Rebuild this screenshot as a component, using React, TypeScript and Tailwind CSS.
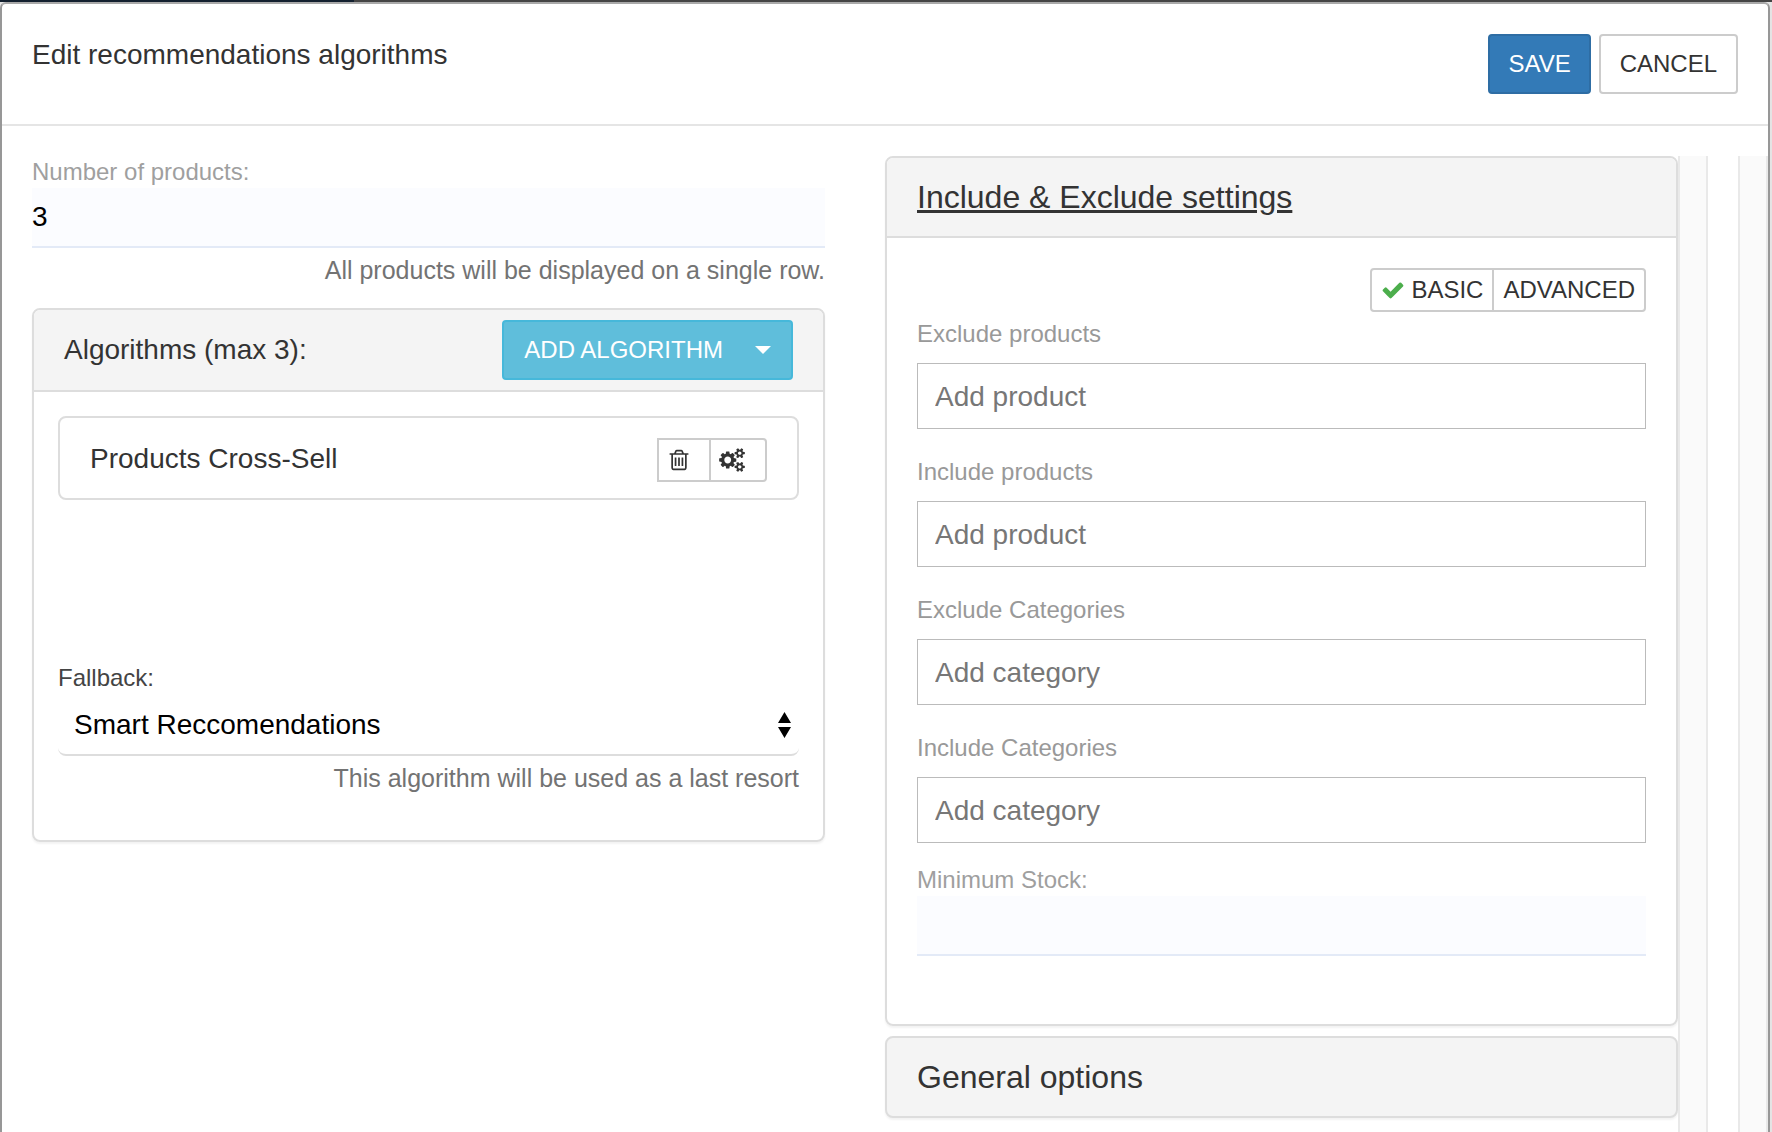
import { useState } from "react";

const TRASH =
  "M704 736v576q0 14-9 23t-23 9h-64q-14 0-23-9t-9-23v-576q0-14 9-23t23-9h64q14 0 23 9t9 23zm256 0v576q0 14-9 23t-23 9h-64q-14 0-23-9t-9-23v-576q0-14 9-23t23-9h64q14 0 23 9t9 23zm256 0v576q0 14-9 23t-23 9h-64q-14 0-23-9t-9-23v-576q0-14 9-23t23-9h64q14 0 23 9t9 23zm128 724v-948h-896v948q0 22 7 40.5t14.5 27 10.5 8.5h832q3 0 10.5-8.5t14.5-27 7-40.5zm-672-1076h448l-48-117q-7-9-17-11h-317q-10 2-17 11zm928 32v64q0 14-9 23t-23 9h-96v948q0 83-47 143.5t-113 60.5h-832q-66 0-113-58.5t-47-141.5v-952h-96q-14 0-23-9t-9-23v-64q0-14 9-23t23-9h309l70-167q15-37 54-63t79-26h320q40 0 79 26t54 63l70 167h309q14 0 23 9t9 23z";

const CHECK =
  "M1671 566q0 40-28 68l-724 724-136 136q-28 28-68 28t-68-28l-136-136-362-362q-28-28-28-68t28-68l136-136q28-28 68-28t68 28l294 295 656-657q28-28 68-28t68 28l136 136q28 28 28 68z";

const COGS =
  "M896 896q0-106-75-181t-181-75-181 75-75 181 75 181 181 75 181-75 75-181zm768 512q0-52-38-90t-90-38-90 38-38 90q0 53 37.5 90.5t90.5 37.5 90.5-37.5 37.5-90.5zm0-1024q0-52-38-90t-90-38-90 38-38 90q0 53 37.5 90.5t90.5 37.5 90.5-37.5 37.5-90.5zm-384 421v185q0 10-7 19.5t-16 10.5l-155 24q-11 35-32 76 34 48 90 115 7 11 7 20 0 12-7 19-23 30-82.5 89.5t-78.5 59.5q-11 0-21-7l-115-90q-37 19-77 31-11 108-23 155-7 24-30 24h-186q-11 0-20-7.5t-10-17.5l-23-153q-34-10-75-31l-118 89q-7 7-20 7-11 0-21-8-144-133-144-160 0-9 7-19 10-14 41-53t47-61q-23-44-35-82l-152-24q-10-1-17-9.5t-7-19.5v-185q0-10 7-19.5t16-10.5l155-24q11-35 32-76-34-48-90-115-7-11-7-20 0-12 7-20 22-30 82-89t79-59q11 0 21 7l115 90q34-18 77-32 11-108 23-154 7-24 30-24h186q11 0 20 7.5t10 17.5l23 153q34 10 75 31l118-89q8-7 20-7 11 0 21 8 144 133 144 160 0 8-7 19-12 16-42 54t-45 60q23 48 34 82l152 23q10 2 17 10.5t7 19.5zm640 533v140q0 16-149 31-12 27-30 52 51 113 51 138 0 4-4 7-122 71-124 71-8 0-46-47t-52-68q-20 2-30 2t-30-2q-14 21-52 68t-46 47q-2 0-124-71-4-3-4-7 0-25 51-138-18-25-30-52-149-15-149-31v-140q0-16 149-31 13-29 30-52-51-113-51-138 0-4 4-7 4-2 35-20t59-34 30-16q8 0 46 46.5t52 67.5q20-2 30-2t30 2q51-71 92-112l6-2q4 0 124 70 4 3 4 7 0 25-51 138 17 23 30 52 149 15 149 31zm0-1024v140q0 16-149 31-12 27-30 52 51 113 51 138 0 4-4 7-122 71-124 71-8 0-46-47t-52-68q-20 2-30 2t-30-2q-14 21-52 68t-46 47q-2 0-124-71-4-3-4-7 0-25 51-138-18-25-30-52-149-15-149-31v-140q0-16 149-31 13-29 30-52-51-113-51-138 0-4 4-7 4-2 35-20t59-34 30-16q8 0 46 46.5t52 67.5q20-2 30-2t30 2q51-71 92-112l6-2q4 0 124 70 4 3 4 7 0 25-51 138 17 23 30 52 149 15 149 31z";

const filters = [
  { id: "exclude-products", label: "Exclude products", placeholder: "Add product" },
  { id: "include-products", label: "Include products", placeholder: "Add product" },
  { id: "exclude-categories", label: "Exclude Categories", placeholder: "Add category" },
  { id: "include-categories", label: "Include Categories", placeholder: "Add category" },
];

function Track() {
  return <div className="w-[30px] shrink-0 border-x-2 border-[#e9e9e9] bg-[#fafafa]" />;
}

export default function App() {
  const [count, setCount] = useState("3");
  const [stock, setStock] = useState("");

  return (
    <div className="flex min-h-screen flex-col bg-[#e4e4e4] font-['Liberation_Sans',Arial,sans-serif] text-2xl leading-8 text-[#333]">
      <div className="flex h-0.5">
        <div className="w-1/5 bg-[#13202f]" />
        <div className="flex-1 bg-[#444]" />
      </div>

      <div className="mr-0.5 flex flex-1 flex-col rounded-t-md border-2 border-b-0 border-[#979797] border-t-[#a9a9a9] bg-white">
        <header className="flex items-start justify-between border-b-2 border-[#e5e5e5] p-[30px]">
          <h1 className="text-[28px] leading-[42px]">Edit recommendations algorithms</h1>
          <div className="flex gap-2">
            <button className="h-[60px] rounded border-2 border-[#2e6da4] bg-[#337ab7] px-[18px] text-white">SAVE</button>
            <button className="h-[60px] rounded border-2 border-[#ccc] bg-white px-[19px]">CANCEL</button>
          </div>
        </header>

        <div className="flex flex-1 pt-[30px] pl-[30px]">
          <div className="min-w-0 flex-1">
            <label htmlFor="count" className="block text-[#9f9f9f]">Number of products:</label>
            <input
              id="count"
              value={count}
              onChange={(e) => setCount(e.target.value)}
              className="block h-[60px] w-full border-b-2 border-[#e3eaf7] bg-[#fbfcff] text-[28px] text-black outline-none"
            />
            <p className="mt-1.5 text-right text-[25px] text-[#737373]">All products will be displayed on a single row.</p>

            <section className="mt-[22px] rounded-lg border-2 border-[#ddd] shadow-[0_2px_2px_rgba(0,0,0,0.05)]">
              <div className="flex h-[82px] items-center justify-between rounded-t-md border-b-2 border-[#ddd] bg-[#f4f4f4] px-[30px]">
                <h2 className="text-[28px] leading-[42px]">Algorithms (max 3):</h2>
                <button className="flex h-[60px] items-center gap-8 rounded border-2 border-[#46b8da] bg-[#5fbedb] px-5 text-white">
                  ADD ALGORITHM
                  <svg className="h-2 w-4" viewBox="0 0 16 8" fill="currentColor">
                    <path d="M0 0h16L8 8z" />
                  </svg>
                </button>
              </div>

              <div className="px-6 pt-6 pb-[46px]">
                <ul className="min-h-[246px]">
                  <li className="flex justify-between rounded-lg border-2 border-[#ddd] px-[30px] pt-5 pb-4">
                    <span className="text-[28px] leading-[42px]">Products Cross-Sell</span>
                    <div className="flex">
                      <button aria-label="Delete" className="h-11 w-[54px] border-2 border-[#ccc] pl-2">
                        <svg className="size-6" viewBox="0 0 1792 1792" fill="currentColor">
                          <path d={TRASH} />
                        </svg>
                      </button>
                      <button aria-label="Settings" className="-ml-0.5 h-11 w-[58px] rounded-r border-2 border-[#ccc] pl-2">
                        <svg className="h-6 w-[26px]" viewBox="0 0 1920 1792" fill="currentColor">
                          <path d={COGS} />
                        </svg>
                      </button>
                    </div>
                  </li>
                </ul>

                <label htmlFor="fallback" className="block text-[#444]">Fallback:</label>
                <div className="relative">
                  <select
                    id="fallback"
                    className="block h-[62px] w-full appearance-none rounded-b-lg border-b-2 border-[#ddd] bg-white px-4 pt-0.5 text-[28px] text-black"
                  >
                    <option>Smart Reccomendations</option>
                  </select>
                  <svg className="pointer-events-none absolute top-[18px] right-2 h-[26px] w-[13px]" viewBox="0 0 13 26">
                    <path d="M6.5 0L13 11H0zM0 15h13L6.5 26z" />
                  </svg>
                </div>
                <p className="mt-1.5 text-right text-[25px] text-[#737373]">This algorithm will be used as a last resort</p>
              </div>
            </section>
          </div>

          <div className="ml-[60px] min-w-0 flex-1">
            <section className="rounded-lg border-2 border-[#ddd] shadow-[0_2px_2px_rgba(0,0,0,0.05)]">
              <div className="flex h-20 items-center rounded-t-md border-b-2 border-[#ddd] bg-[#f4f4f4] px-[30px]">
                <button className="text-[32px] leading-10 underline">Include &amp; Exclude settings</button>
              </div>

              <div className="px-[30px] pt-[30px] pb-[68px]">
                <div className="flex justify-end">
                  <button className="flex h-11 items-center gap-1.5 rounded-l border-2 border-[#ccc] px-[9px]">
                    <svg className="size-6 text-[#4cae4c]" viewBox="0 0 1792 1792" fill="currentColor">
                      <path d={CHECK} />
                    </svg>
                    BASIC
                  </button>
                  <button className="-ml-0.5 h-11 rounded-r border-2 border-[#ccc] px-[9px]">ADVANCED</button>
                </div>

                <div className="mt-1.5 flex flex-col gap-[27px]">
                  {filters.map((f) => (
                    <div key={f.id}>
                      <label htmlFor={f.id} className="block text-[#999]">{f.label}</label>
                      <input
                        id={f.id}
                        placeholder={f.placeholder}
                        className="mt-[13px] block h-[66px] w-full border border-[#bbb] px-[17px] pt-0.5 text-[28px] outline-none placeholder:text-[#777]"
                      />
                    </div>
                  ))}
                </div>

                <label htmlFor="stock" className="mt-[21px] block text-[#9f9f9f]">Minimum Stock:</label>
                <input
                  id="stock"
                  value={stock}
                  onChange={(e) => setStock(e.target.value)}
                  className="block h-[60px] w-full border-b-2 border-[#e3eaf7] bg-[#fbfcff] text-[28px] text-black outline-none"
                />
              </div>
            </section>

            <section className="mt-[10px] flex h-[82px] items-center rounded-lg border-2 border-[#ddd] bg-[#f4f4f4] px-[30px] shadow-[0_2px_2px_rgba(0,0,0,0.05)]">
              <button className="text-[32px] leading-10">General options</button>
            </section>
          </div>

          <Track />
          <div className="w-[30px] shrink-0" />
          <Track />
        </div>
      </div>
    </div>
  );
}
